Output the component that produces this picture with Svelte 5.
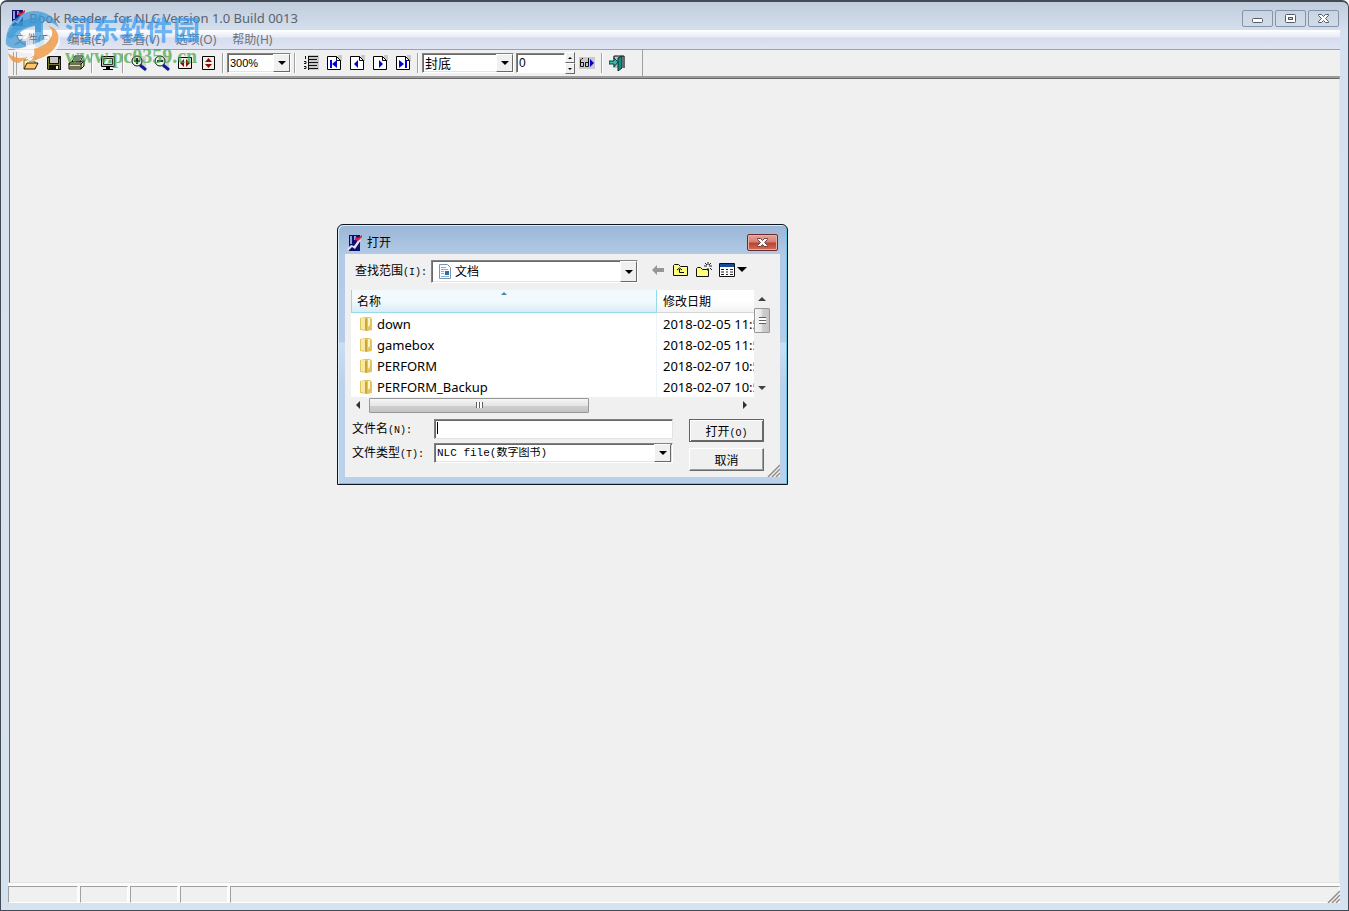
<script>
  const menus = ['文件(F)', '编辑(E)', '查看(V)', '选项(O)', '帮助(H)'];

  const folders = [
    { name: 'down', date: '2018-02-05 11:53' },
    { name: 'gamebox', date: '2018-02-05 11:53' },
    { name: 'PERFORM', date: '2018-02-07 10:52' },
    { name: 'PERFORM_Backup', date: '2018-02-07 10:52' },
  ];

  let zoom = $state('300%');
  let page = $state('封底');
  let pageNumber = $state('0');
  let fileName = $state('');
</script>

{#snippet appIcon()}
  <svg width="16" height="16" viewBox="0 0 16 16" aria-hidden="true">
    <path d="M2 0h11v16H2z" fill="#10106c" />
    <path d="M3 1h2v8H3zM7 1h2v4H7z" fill="#8fa0dc" />
    <path d="M0 14l4-4 3 1 5-7 2 1-6 9-3-2-3 3z" fill="#dfe4f4" />
    <path d="M8 3l2-1 1 1 4-3v2l-4 4-3-1z" fill="#d8213c" />
  </svg>
{/snippet}

{#snippet pageIcon(kind)}
  <svg width="16" height="16" viewBox="0 0 16 16" aria-hidden="true">
    <path d="M12 0h4v6h-4z" fill="#c8c8c8" />
    <path d="M1.5 1.5h9l4 4v9h-13z" fill="#fff" stroke="#000" />
    <path d="M10.5 1.5v4h4" fill="none" stroke="#000" />
    {#if kind === 'first'}
      <path d="M4 5h2v8H4zM11 5v8L6 9z" fill="#0000d8" />
    {:else if kind === 'prev'}
      <path d="M9 5v8L5 9z" fill="#0000d8" />
    {:else if kind === 'next'}
      <path d="M7 5v8l4-4z" fill="#0000d8" />
    {:else}
      <path d="M4 5v8l5-4zM10 5h2v8h-2z" fill="#0000d8" />
    {/if}
  </svg>
{/snippet}

{#snippet zoomIcon(plus)}
  <svg width="18" height="16" viewBox="0 0 18 16" aria-hidden="true">
    <path d="M10 1h6v12h-6z" fill="#d0d0d0" />
    <path d="M10 10l6 5" stroke="#0a1e9c" stroke-width="3" />
    <circle cx="7" cy="6" r="5" fill="#e8f4f0" stroke="#111" />
    <path d={plus ? 'M4 6h6M7 3v6' : 'M4 6h6'} stroke="#000" stroke-width="1.6" />
  </svg>
{/snippet}

<div class="window">
  <header class="title-bar">
    {@render appIcon()}
    <h1>Book Reader&nbsp; for NLC Version 1.0 Build 0013</h1>
    <div class="window-buttons">
      <button aria-label="最小化">
        <svg width="13" height="11" viewBox="0 0 13 11"><rect x="1.5" y="5.5" width="10" height="4" rx="1" fill="#fff" stroke="#525967" /></svg>
      </button>
      <button aria-label="最大化">
        <svg width="13" height="11" viewBox="0 0 13 11"><rect x="1.5" y="1.5" width="10" height="8" rx="1" fill="#fff" stroke="#525967" /><rect x="4.5" y="4.5" width="4" height="2" fill="#c5d0df" stroke="#525967" /></svg>
      </button>
      <button aria-label="关闭">
        <svg width="13" height="11" viewBox="0 0 13 11"><path d="M1.500 1.500h3l2 2 2-2h3v1l-3 3 3 3v1h-3l-2-2-2 2h-3v-1l3-3-3-3z" fill="#fff" stroke="#525967" /></svg>
      </button>
    </div>
  </header>

  <nav class="menu-bar">
    {#each menus as menu}
      <button>{menu}</button>
    {/each}
  </nav>

  <div class="toolbar">
    <span class="grip"></span>
    <button class="tool" aria-label="打开">
      <svg width="16" height="16" viewBox="0 0 16 16">
        <path d="M1 14V5h4l1 1h6v3" fill="#fff6a8" stroke="#8a6420" />
        <path d="M1 14l3-6h11l-3 6z" fill="#ffc568" stroke="#241804" />
        <path d="M8 3c1-2 4-2 5 1m1-3v3h-3" fill="none" stroke="#111" />
      </svg>
    </button>
    <button class="tool" aria-label="保存">
      <svg width="16" height="16" viewBox="0 0 16 16">
        <path d="M1 1h14v14H2l-1-1z" fill="#111" />
        <path d="M4 2h8v6H4z" fill="#c6c6c0" />
        <path d="M2 3h1v11H2zM13 4h1v10h-1zM3 9h10v1H3z" fill="#77782e" />
        <path d="M10 11h2v3h-2z" fill="#f4f4f4" />
      </svg>
    </button>
    <button class="tool" aria-label="打印">
      <svg width="18" height="16" viewBox="0 0 18 16">
        <path d="M4 7l3-6h8l-3 6z" fill="#fff" stroke="#000" />
        <path d="M7 3h6M6 5h6" stroke="#000" />
        <path d="M1 8l2-1h10l3-2v6l-3 3H1z" fill="#e2e2a0" stroke="#000" />
        <path d="M1 9h12v5M13 9l3-3M2 12h10" fill="none" stroke="#000" />
        <path d="M6 10h5v1H6z" fill="#f7f700" />
      </svg>
    </button>
    <span class="divider"></span>
    <button class="tool" aria-label="全屏">
      <svg width="16" height="16" viewBox="0 0 16 16">
        <path d="M1.500 1.500h13v10h-13z" fill="#c0c0c0" stroke="#000" />
        <path d="M3.500 3.500h9v6h-9z" fill="#a5e5cf" stroke="#333" />
        <path d="M4 8l4-4h3L6 9z" fill="#e8fff8" />
        <path d="M6 12h4v2H6zM3 14h10v1H3z" fill="#000" />
      </svg>
    </button>
    <span class="divider"></span>
    <button class="tool" aria-label="放大">{@render zoomIcon(true)}</button>
    <button class="tool" aria-label="缩小">{@render zoomIcon(false)}</button>
    <button class="tool" aria-label="适合宽度">
      <svg width="16" height="16" viewBox="0 0 16 16">
        <path d="M1.500 2.500h13v11h-13z" fill="#f5efe9" stroke="#000" />
        <path d="M7 4v8L3 8zM9 4v8l4-4z" fill="#8b0a0a" />
      </svg>
    </button>
    <button class="tool" aria-label="适合高度">
      <svg width="16" height="16" viewBox="0 0 16 16">
        <path d="M2.500 1.500h12v13h-12z" fill="#f5efe9" stroke="#000" />
        <path d="M5 7h7L8.500 3zM5 9h7l-3.500 4z" fill="#8b0a0a" />
      </svg>
    </button>
    <span class="divider"></span>
    <div class="combo zoom-combo">
      <select aria-label="缩放比例" bind:value={zoom}>
        <option>300%</option>
        <option>200%</option>
        <option>100%</option>
      </select>
      <span class="arrow"></span>
    </div>
    <span class="divider"></span>
    <button class="tool" aria-label="目录">
      <svg width="16" height="16" viewBox="0 0 16 16">
        <path d="M5 0h11v15H5z" fill="#c8c8c8" />
        <path d="M5 1.500h10M5 4.500h9M5 7.500h10M5 10.500h9M5 13.500h10" stroke="#111" />
        <path d="M5.500 1v14M2.500 1v3M1 6.500h2v2H1M1 11.500h2v2H1" fill="none" stroke="#111" />
      </svg>
    </button>
    <button class="tool" aria-label="第一页">{@render pageIcon('first')}</button>
    <button class="tool" aria-label="上一页">{@render pageIcon('prev')}</button>
    <button class="tool" aria-label="下一页">{@render pageIcon('next')}</button>
    <button class="tool" aria-label="最后一页">{@render pageIcon('last')}</button>
    <span class="divider"></span>
    <div class="combo page-combo">
      <select aria-label="页面" bind:value={page}>
        <option>封底</option>
        <option>封面</option>
      </select>
      <span class="arrow"></span>
    </div>
    <input class="page-input" aria-label="页码" bind:value={pageNumber} />
    <div class="spinner">
      <button aria-label="增加"></button>
      <button aria-label="减少"></button>
    </div>
    <button class="tool" aria-label="转到">
      <svg width="16" height="12" viewBox="0 0 16 12">
        <path d="M0 0h16v12H0z" fill="#c9c9c9" />
        <path d="M4 1.500H3L1.500 3v6.500h3v-4h-3M9.500 1v8.500h-3v-4h3" fill="none" stroke="#111" />
        <path d="M11 2v8l4-4z" fill="#0000d8" />
      </svg>
    </button>
    <span class="divider"></span>
    <button class="tool" aria-label="退出">
      <svg width="17" height="16" viewBox="0 0 17 16">
        <path d="M4 1h12v12H4z" fill="#c0c0c0" />
        <path d="M5 4V1h10v12" fill="none" stroke="#111" />
        <path d="M9 3l4-2v12l-4 3z" fill="#168c88" stroke="#062c2c" />
        <path d="M0 6h5V3l4 4-4 5V9H0z" fill="#35b9ac" stroke="#073e3b" />
      </svg>
    </button>
  </div>

  <main class="workspace"></main>

  <footer class="status-bar">
    <span class="cell first"></span>
    <span class="cell"></span>
    <span class="cell"></span>
    <span class="cell"></span>
    <span class="cell rest"></span>
    <svg class="size-grip" width="13" height="13" viewBox="0 0 13 13"><path d="M1 13L13 1M5 13l8-8M9 13l4-4" stroke="#948c88" stroke-width="1.5" /></svg>
  </footer>
</div>

<div class="watermark" aria-hidden="true">
  <svg width="58" height="56" viewBox="0 0 58 56">
    <path d="M1 36C0 18 12 4 29 3c13 0 22 7 25 17-5-5-10-7-16-7v26h-8V18C19 20 13 25 13 29c0 3 3 4 8 4v6C12 41 4 41 1 36z" fill="#3d99d6" opacity="0.7" />
    <path d="M2 26c7-11 17-15 29-16l5-5v19h-6v-7C18 19 9 24 9 29c-5 3-7 0-7-3z" fill="#3d99d6" opacity="0.7" />
    <path d="M14 31l10-10v16c13-2 22-10 22-17 7 4 11 11 8 18-5 10-18 16-33 15 4-2 6-5 6-8-8 1-14-1-18-4 7 0 12-2 14-4v-6z" fill="#fff" opacity="0.7" />
    <path d="M43 18c8 1 12 8 10 16-4 10-14 17-27 19 3-4 4-8 3-12 10-3 16-8 18-14 1-4-1-7-4-9z" fill="#ee963f" opacity="0.8" />
    <path d="M3 45c6 5 12 6 20 4l-9 6C8 55 4 51 3 45z" fill="#ee963f" opacity="0.8" />
  </svg>
  <div class="watermark-text">
    <strong>河东软件园</strong>
    <span>www.pc0359.cn</span>
  </div>
</div>

<div class="dialog" role="dialog" aria-labelledby="dialog-title">
  <header class="dialog-title">
    {@render appIcon()}
    <h2 id="dialog-title">打开</h2>
    <button class="dialog-close" aria-label="关闭">
      <svg width="13" height="11" viewBox="0 0 13 11"><path d="M1.500 1.500h3l2 2 2-2h3v1l-3 3 3 3v1h-3l-2-2-2 2h-3v-1l3-3-3-3z" fill="#fff" stroke="#70423f" /></svg>
    </button>
  </header>
  <div class="dialog-body">
    <div class="lookup">
      <label for="folder">查找范围<span class="latin">(I):</span></label>
      <div class="combo folder-combo">
        <svg width="16" height="16" viewBox="0 0 16 16">
          <path d="M2.500.5h8l3 3v11h-11z" fill="#f8fbff" stroke="#7d95ac" />
          <path d="M4 3.500h5M4 5.500h7M4 7.500h3M4 9.500h3M4 12.500h8" stroke="#83b3df" />
          <path d="M8 7h4v4H8z" fill="#356a9e" />
        </svg>
        <select id="folder">
          <option>文档</option>
        </select>
        <span class="arrow"></span>
      </div>
      <div class="lookup-tools">
        <button aria-label="后退">
          <svg width="16" height="16" viewBox="0 0 16 16"><path d="M2 8l5-5v3h7v4H7v3z" fill="#969696" /></svg>
        </button>
        <button aria-label="向上">
          <svg width="16" height="16" viewBox="0 0 16 16">
            <path d="M.5 13.500v-10l1-1h4l2 2h7v9z" fill="#ffff7d" stroke="#111" />
            <path d="M11 10.500H6.500V7M4 8l2.500-2L9 8" fill="none" stroke="#000" />
          </svg>
        </button>
        <button aria-label="新建文件夹">
          <svg width="16" height="16" viewBox="0 0 16 16">
            <path d="M.5 14.500v-8l1-1h3l2 2h6v7z" fill="#ffff7d" stroke="#111" />
            <path d="M12 0v3M12 6v3M8 4h3M13 4h3M9 1l2 2M15 1l-2 2M14 6l2 2" stroke="#222" />
          </svg>
        </button>
        <button aria-label="查看">
          <svg width="28" height="16" viewBox="0 0 28 16">
            <path d="M.5 1.500h15v13H.5z" fill="#fff" stroke="#111" />
            <path d="M1 2h14v3H1z" fill="#174a9d" />
            <path d="M2 7.500h3M7 7.500h2M11 7.500h3M2 10h3M7 10h2M11 10h3M2 12.500h3M7 12.500h2M11 12.500h3" stroke="#222" />
            <path d="M18 5h10l-5 5z" fill="#000" />
          </svg>
        </button>
      </div>
    </div>

    <div class="file-list">
      <div class="list-view">
        <table>
          <thead>
            <tr>
              <th class="sorted">名称<i class="sort-mark"></i></th>
              <th>修改日期</th>
            </tr>
          </thead>
          <tbody>
            {#each folders as folder (folder.name)}
              <tr>
                <td>
                  <div class="file-name">
                    <svg width="16" height="16" viewBox="0 0 16 16">
                      <path d="M2 2l5-1h5l2 2v11l-5 1-7-1z" fill="#e3c560" />
                      <path d="M3 2h4v12l-4-1z" fill="#f7e8a4" />
                      <path d="M7 3h2v12l-2-1z" fill="#cba63a" />
                      <path d="M10 2h2v7l-2 2z" fill="#fff5c9" />
                    </svg>
                    {folder.name}
                  </div>
                </td>
                <td>{folder.date}</td>
              </tr>
            {/each}
          </tbody>
        </table>
      </div>
      <div class="scroll vertical">
        <i class="tip up"></i>
        <span class="thumb"><i></i></span>
        <i class="tip down"></i>
      </div>
      <div class="scroll horizontal">
        <i class="tip left"></i>
        <span class="thumb"><i></i></span>
        <i class="tip right"></i>
      </div>
    </div>

    <form class="file-form" onsubmit={(e) => e.preventDefault()}>
      <div class="fields">
        <label for="file-name">文件名<span class="latin">(N):</span></label>
        <div class="name-field">
          <!-- svelte-ignore a11y_autofocus -->
          <input id="file-name" bind:value={fileName} autofocus />
          <span class="caret"></span>
        </div>
        <label for="file-type">文件类型<span class="latin">(T):</span></label>
        <div class="combo type-combo">
          <select id="file-type">
            <option>NLC file(数字图书)</option>
          </select>
          <span class="arrow"></span>
        </div>
      </div>
      <div class="actions">
        <button class="default">打开<span class="latin">(O)</span></button>
        <button type="button">取消</button>
      </div>
    </form>
    <svg class="dialog-grip" width="13" height="13" viewBox="0 0 13 13"><path d="M1 13L13 1M5 13l8-8M9 13l4-4" stroke="#948c88" stroke-width="1.5" /></svg>
  </div>
</div>

<style>
  :global(body) {
    background: #fff;
    font-family: 'Noto Sans', 'Noto Sans CJK SC', sans-serif;
    font-size: 12px;
    color: #000;
  }

  :global(*) {
    box-sizing: border-box;
  }

  button,
  input,
  select {
    margin: 0;
    padding: 0;
    border: none;
    border-radius: 0;
    outline: none;
    background: none;
    font: inherit;
    color: inherit;
  }

  svg {
    display: block;
    flex: none;
  }

  .window {
    display: flex;
    flex-direction: column;
    height: 100vh;
    padding: 0 8px 7px 7px;
    border: 1px solid #444a53;
    border-top-width: 2px;
    border-radius: 7px 7px 0 0;
    background: linear-gradient(#c0ccdb 0, #d5e1ee 30px, #d5e2f0 100%);
  }

  .title-bar {
    display: flex;
    align-items: center;
    flex: none;
    height: 28px;
    padding: 4px 1px 0 2px;
  }

  .title-bar h1 {
    flex: 1;
    margin: 0 0 0 3px;
    font-size: 13px;
    line-height: 18px;
    font-weight: 400;
    color: #5a6270;
  }

  .window-buttons {
    display: flex;
    gap: 2px;
  }

  .window-buttons button {
    display: flex;
    align-items: center;
    justify-content: center;
    width: 31px;
    height: 17px;
    border: 1px solid #8593ab;
    border-radius: 2px;
    background: linear-gradient(#c9d4e2, #d2dce9);
  }

  .menu-bar {
    display: flex;
    flex: none;
    height: 19px;
    background: linear-gradient(#fff 0, #e7ebf5 7px, #d6dcee 8px, #e0e5f3 100%);
  }

  .menu-bar button {
    padding: 0 10px 0 6px;
    color: #707277;
    line-height: 19px;
  }

  .toolbar {
    display: flex;
    align-items: center;
    flex: none;
    width: 100%;
    height: 29px;
    border-top: 1px solid #a0a0a8;
    border-bottom: 2px solid #9b9b9b;
    background: linear-gradient(90deg, transparent 634px, #a0a0a0 634px, #a0a0a0 635px, transparent 635px) #f0f0f0;
  }

  .grip {
    width: 4px;
    height: 23px;
    margin: 0 2px 0 5px;
    border: solid #a5a5a5;
    border-width: 0 1px;
  }

  .tool {
    display: flex;
    align-items: center;
    justify-content: center;
    width: 23px;
    height: 22px;
  }

  .divider {
    width: 8px;
    height: 20px;
    background: linear-gradient(90deg, transparent 3px, #a0a0a0 3px, #a0a0a0 4px, #fff 4px, #fff 5px, transparent 5px);
  }

  .combo {
    display: flex;
    align-items: center;
    height: 20px;
    border: 1px solid;
    border-color: #828282 #fff #fff #828282;
    box-shadow: inset 1px 1px #696969, inset -1px -1px #e3e3e3;
    background: #fff;
  }

  .combo select {
    flex: 1;
    min-width: 0;
    padding-left: 2px;
    appearance: none;
  }

  .arrow {
    display: flex;
    align-items: center;
    justify-content: center;
    width: 17px;
    height: 100%;
    border: 1px solid;
    border-color: #fff #696969 #696969 #fff;
    background: #f0f0f0;
    pointer-events: none;
  }

  .arrow::after {
    content: '';
    border: 4px solid transparent;
    border-top-color: #000;
    border-bottom: none;
  }

  .zoom-combo {
    width: 64px;
    font-family: 'Liberation Sans', sans-serif;
    font-size: 11px;
  }

  .page-combo {
    width: 92px;
    font-size: 13px;
  }

  .page-input {
    width: 49px;
    height: 20px;
    margin-left: 2px;
    padding-left: 2px;
    border: 1px solid;
    border-color: #828282 #fff #fff #828282;
    box-shadow: inset 1px 1px #696969;
    background: #fff;
    font-family: 'Liberation Sans', sans-serif;
  }

  .spinner {
    display: flex;
    flex-direction: column;
    width: 10px;
    height: 22px;
  }

  .spinner button {
    display: flex;
    align-items: center;
    justify-content: center;
    flex: 1;
    border: 1px solid;
    border-color: #fff #696969 #696969 #fff;
  }

  .spinner button::after {
    content: '';
    border: 2px solid transparent;
    border-top: none;
    border-bottom-color: #000;
  }

  .spinner button:last-child::after {
    transform: rotate(180deg);
  }

  .workspace {
    flex: 1;
    margin-left: 1px;
    border: 1px solid;
    border-color: #696969 #e3e3e3 #e3e3e3 #696969;
    background: #f0f0f0;
    box-shadow: 0 1px #fff;
  }

  .status-bar {
    position: relative;
    display: flex;
    gap: 2px;
    flex: none;
    height: 20px;
    padding-top: 3px;
    background: #fbfbfb;
  }

  .cell {
    width: 48px;
    border: 1px solid;
    border-color: #a0a0a0 #fff #fff #a0a0a0;
    background: #f0f0f0;
  }

  .cell.first {
    width: 70px;
  }

  .cell.rest {
    flex: 1;
  }

  .size-grip,
  .dialog-grip {
    position: absolute;
    right: 0;
    bottom: 0;
  }

  .watermark {
    position: absolute;
    top: 8px;
    left: 5px;
    display: flex;
    gap: 2px;
    pointer-events: none;
  }

  .watermark-text {
    display: flex;
    flex-direction: column;
    padding-top: 7px;
    opacity: 0.7;
  }

  .watermark strong {
    font-size: 27px;
    line-height: 30px;
    font-weight: 700;
    color: #3399f0;
  }

  .watermark span {
    font-family: 'Liberation Serif', serif;
    font-size: 20px;
    line-height: 22px;
    font-weight: 700;
    color: #44a648;
  }

  .dialog {
    position: absolute;
    top: 224px;
    left: 337px;
    width: 451px;
    padding: 0 7px 7px;
    border: 1px solid #10161d;
    border-radius: 6px 6px 0 0;
    box-shadow: inset 1px 1px #d8ecfa, inset -1px -1px #62c6e5;
    background: linear-gradient(#9ab6d7 0, #b2cae5 30px, #b5cde8 117px, #cbdff2 118px, #b9d1ea 160px, #b9d1ea 100%);
  }

  .dialog-title {
    display: flex;
    align-items: center;
    height: 29px;
    padding: 6px 2px 0;
  }

  .dialog-title h2 {
    flex: 1;
    margin: 0 0 0 4px;
    font-size: 12px;
    line-height: 18px;
    font-weight: 400;
  }

  .dialog-close {
    display: flex;
    align-items: center;
    justify-content: center;
    width: 31px;
    height: 17px;
    border: 1px solid #6b2a2c;
    border-radius: 2px;
    box-shadow: inset 0 0 0 1px #e8b0a4;
    background: linear-gradient(#e5a497 0, #d38173 7px, #bd3f2c 8px, #d0725c 100%);
  }

  .dialog-body {
    position: relative;
    padding: 6px 10px 6px 6px;
    background: #f0f0f0;
  }

  .latin {
    font-family: 'Liberation Mono', monospace;
    font-size: 10px;
  }

  .lookup {
    display: flex;
    align-items: center;
    height: 23px;
    padding-left: 4px;
  }

  .lookup label {
    width: 76px;
    padding-bottom: 4px;
    white-space: nowrap;
  }

  .folder-combo {
    width: 207px;
    height: 23px;
    padding-left: 5px;
  }

  .type-combo .arrow {
    margin-right: 1px;
  }

  .lookup-tools {
    display: flex;
    gap: 7px;
    padding-bottom: 3px;
    margin-left: 12px;
  }

  .file-list {
    display: grid;
    grid-template-columns: 403px 16px;
    grid-template-rows: 107px 16px;
    margin-top: 7px;
  }

  .list-view {
    overflow: hidden;
    background: #fff;
  }

  table {
    width: 440px;
    table-layout: fixed;
    border-spacing: 0;
    font-size: 13px;
  }

  th {
    height: 23px;
    padding: 0 6px;
    border-bottom: 1px solid #d5d5d5;
    background: linear-gradient(#fff 50%, #f1f2f4);
    font-size: 12px;
    font-weight: 400;
    text-align: left;
  }

  th.sorted {
    position: relative;
    width: 306px;
    padding-left: 5px;
    border: solid #96d9e9;
    border-width: 0 1px 1px;
    background: linear-gradient(#f3fafd 50%, #d8ecf6);
  }

  .sort-mark {
    position: absolute;
    top: 2px;
    left: 149px;
    border: 3px solid transparent;
    border-top: none;
    border-bottom-color: #4b83a1;
  }

  td {
    height: 21px;
    padding: 0 6px;
    line-height: 20px;
    white-space: nowrap;
  }

  td:first-child {
    border-right: 1px solid #edf3f8;
  }

  .file-name {
    display: flex;
    align-items: center;
    gap: 3px;
    padding-left: 1px;
  }

  .scroll {
    display: flex;
    align-items: center;
  }

  .thumb {
    display: flex;
    align-items: center;
    justify-content: center;
    border: 1px solid #979797;
    border-radius: 1px;
    background: linear-gradient(#f5f5f5 0, #e5e5e5 50%, #cfcfcf 51%, #c4c4c6 100%);
  }

  .tip {
    flex: none;
    border: 4px solid transparent;
  }

  .up {
    border-top: none;
    border-bottom-color: #404040;
  }

  .down {
    margin-top: auto;
    border-bottom: none;
    border-top-color: #404040;
  }

  .left {
    border-left: none;
    border-right-color: #303030;
  }

  .right {
    margin-left: auto;
    border-right: none;
    border-left-color: #303030;
  }

  .vertical {
    flex-direction: column;
    padding: 7px 0;
  }

  .vertical .thumb {
    width: 16px;
    height: 25px;
    margin-top: 7px;
    background: linear-gradient(90deg, #f5f5f5 0, #e5e5e5 50%, #cfcfcf 51%, #c4c4c6 100%);
  }

  .vertical .thumb i {
    width: 7px;
    height: 7px;
    background: repeating-linear-gradient(#606060 0, #606060 1px, #fff 1px, #fff 3px);
  }

  .horizontal {
    padding: 0 7px 0 5px;
  }

  .horizontal .thumb {
    width: 220px;
    height: 15px;
    margin-left: 9px;
  }

  .horizontal .thumb i {
    width: 7px;
    height: 6px;
    background: repeating-linear-gradient(90deg, #606060 0, #606060 1px, #fff 1px, #fff 3px);
  }

  .file-form {
    display: flex;
    justify-content: space-between;
    padding: 6px 6px 0 1px;
  }

  .fields {
    display: grid;
    grid-template-columns: 82px 239px;
    grid-auto-rows: 20px;
    gap: 4px 0;
    align-items: center;
    align-content: start;
  }

  .fields label {
    padding-bottom: 2px;
  }

  .name-field {
    position: relative;
    display: flex;
  }

  .name-field input {
    width: 100%;
    height: 20px;
    padding-left: 3px;
    border: 1px solid;
    border-color: #828282 #e3e3e3 #e3e3e3 #828282;
    box-shadow: inset 1px 1px #696969;
    background: #fff;
    caret-color: transparent;
  }

  .caret {
    position: absolute;
    top: 3px;
    left: 3px;
    width: 1px;
    height: 12px;
    background: #000;
  }

  .type-combo {
    font-family: 'Liberation Mono', 'Noto Sans CJK SC', monospace;
    font-size: 11px;
  }

  .actions {
    display: flex;
    flex-direction: column;
    gap: 6px;
    width: 75px;
  }

  .actions button {
    height: 23px;
    border: 1px solid;
    border-color: #fff #696969 #696969 #fff;
    box-shadow: inset -1px -1px #a0a0a0;
    background: #f0f0f0;
  }

  .actions .default {
    border-color: #646464;
    box-shadow: inset 1px 1px #fff, inset -1px -1px #696969;
  }
</style>
